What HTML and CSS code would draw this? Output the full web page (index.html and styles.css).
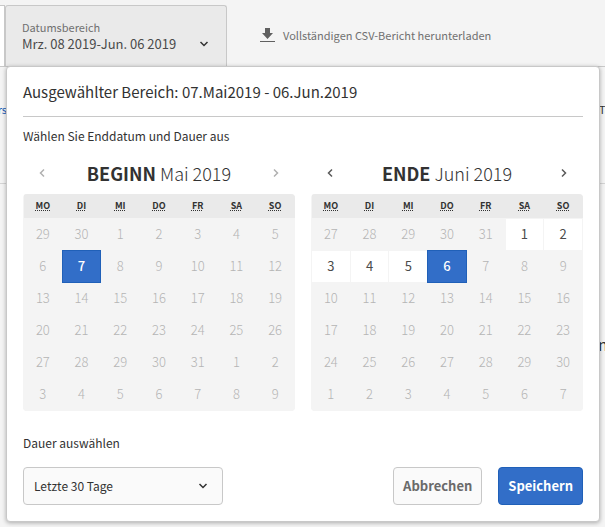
FILE: index.html
```html
<!DOCTYPE html>
<html lang="de">
<head>
<meta charset="utf-8">
<meta name="viewport" content="width=device-width, initial-scale=1">
<title>Datumsbereich</title>
<link rel="stylesheet" href="styles.css">
</head>
<body>
<header class="toolbar">
  <div class="filters">
    <div class="filter-stub"></div>
    <button class="range-button" type="button" aria-expanded="true">
      <span class="range-label">Datumsbereich</span>
      <span class="range-value">Mrz. 08 2019-Jun. 06 2019
        <svg class="chevron" viewBox="0 0 10 6" aria-hidden="true"><path d="M1.500 1 5 4.500 8.500 1"/></svg>
      </span>
    </button>
  </div>
  <a class="download" href="#">
    <svg class="download-icon" viewBox="0 0 15 14" aria-hidden="true"><path d="M5 0h5v5h3L7.500 11 2 5h3zM0 13h15v1H0z"/></svg>
    Vollständigen CSV-Bericht herunterladen
  </a>
</header>
<main class="report">
  <div class="report-head"><span class="cut-link">rs</span><span class="cut-heading">Ta</span></div>
  <div class="report-body"><span class="cut-text">n</span></div>

  <form class="popover" aria-label="Datumsbereich">
    <h2 class="title">Ausgewählter Bereich: 07.Mai2019 - 06.Jun.2019</h2>
    <p class="hint">Wählen Sie Enddatum und Dauer aus</p>
    <div class="calendars">
      <section class="calendar">
        <div class="month">
          <button class="nav" type="button" disabled aria-label="Zurück"><svg viewBox="0 0 6 10" aria-hidden="true"><path d="M5 1.500 1.500 5 5 8.500"/></svg></button>
          <h3 class="month-name"><b>BEGINN</b> Mai 2019</h3>
          <button class="nav" type="button" disabled aria-label="Weiter"><svg viewBox="0 0 6 10" aria-hidden="true"><path d="M1 1.500 4.500 5 1 8.500"/></svg></button>
        </div>
        <div class="grid-frame">
        <table class="days">
          <thead><tr><th><abbr>MO</abbr></th><th><abbr>DI</abbr></th><th><abbr>MI</abbr></th><th><abbr>DO</abbr></th><th><abbr>FR</abbr></th><th><abbr>SA</abbr></th><th><abbr>SO</abbr></th></tr></thead>
          <tbody>
            <tr><td>29</td><td>30</td><td>1</td><td>2</td><td>3</td><td>4</td><td>5</td></tr>
            <tr><td>6</td><td class="selected">7</td><td>8</td><td>9</td><td>10</td><td>11</td><td>12</td></tr>
            <tr><td>13</td><td>14</td><td>15</td><td>16</td><td>17</td><td>18</td><td>19</td></tr>
            <tr><td>20</td><td>21</td><td>22</td><td>23</td><td>24</td><td>25</td><td>26</td></tr>
            <tr><td>27</td><td>28</td><td>29</td><td>30</td><td>31</td><td>1</td><td>2</td></tr>
            <tr><td>3</td><td>4</td><td>5</td><td>6</td><td>7</td><td>8</td><td>9</td></tr>
          </tbody>
        </table>
        </div>
      </section>
      <section class="calendar">
        <div class="month">
          <button class="nav" type="button" aria-label="Zurück"><svg viewBox="0 0 6 10" aria-hidden="true"><path d="M5 1.500 1.500 5 5 8.500"/></svg></button>
          <h3 class="month-name"><b>ENDE</b> Juni 2019</h3>
          <button class="nav" type="button" aria-label="Weiter"><svg viewBox="0 0 6 10" aria-hidden="true"><path d="M1 1.500 4.500 5 1 8.500"/></svg></button>
        </div>
        <div class="grid-frame">
        <table class="days">
          <thead><tr><th><abbr>MO</abbr></th><th><abbr>DI</abbr></th><th><abbr>MI</abbr></th><th><abbr>DO</abbr></th><th><abbr>FR</abbr></th><th><abbr>SA</abbr></th><th><abbr>SO</abbr></th></tr></thead>
          <tbody>
            <tr><td>27</td><td>28</td><td>29</td><td>30</td><td>31</td><td class="open">1</td><td class="open">2</td></tr>
            <tr><td class="open">3</td><td class="open">4</td><td class="open">5</td><td class="selected">6</td><td>7</td><td>8</td><td>9</td></tr>
            <tr><td>10</td><td>11</td><td>12</td><td>13</td><td>14</td><td>15</td><td>16</td></tr>
            <tr><td>17</td><td>18</td><td>19</td><td>20</td><td>21</td><td>22</td><td>23</td></tr>
            <tr><td>24</td><td>25</td><td>26</td><td>27</td><td>28</td><td>29</td><td>30</td></tr>
            <tr><td>1</td><td>2</td><td>3</td><td>4</td><td>5</td><td>6</td><td>7</td></tr>
          </tbody>
        </table>
        </div>
      </section>
    </div>
    <label class="duration-label" for="duration">Dauer auswählen</label>
    <div class="actions">
      <div class="select-box">
        <select id="duration"><option>Letzte 30 Tage</option></select>
        <svg class="chevron" viewBox="0 0 10 6" aria-hidden="true"><path d="M1.500 1 5 4.500 8.500 1"/></svg>
      </div>
      <button class="button" type="button">Abbrechen</button>
      <button class="button primary" type="submit">Speichern</button>
    </div>
  </form>
</main>
</body>
</html>
```
FILE: styles.css
```css
* {
  box-sizing: border-box;
}

body {
  margin: 0;
  min-height: 100vh;
  overflow: hidden;
  background: #f4f4f4;
  color: #323232;
  font-family: "Noto Sans CJK SC", "Noto Sans", sans-serif;
  font-size: 12px;
  line-height: 16px;
}

button,
select {
  font: inherit;
  color: inherit;
  margin: 0;
}

h2,
h3,
p {
  margin: 0;
}

.toolbar {
  display: flex;
  align-items: center;
  padding-top: 5px;
  gap: 33px;
}

.filters {
  display: flex;
  width: 227px;
  height: 61px;
}

.filter-stub {
  width: 5px;
  background: #fff;
  border: solid #c8c8c8;
  border-width: 1px 1px 0 0;
}

.range-button {
  flex: 1;
  display: flex;
  flex-direction: column;
  justify-content: center;
  padding: 0 17px 0 16px;
  border: 1px solid #c8c8c8;
  border-bottom: 0;
  border-radius: 3px 3px 0 0;
  background: #eaeaea;
  text-align: left;
}

.range-label {
  color: #707070;
  font-size: 11px;
  line-height: 16px;
}

.range-value {
  display: flex;
  align-items: center;
  justify-content: space-between;
  width: 100%;
  font-size: 13px;
  line-height: 18px;
  color: #4b4b4b;
}

.chevron {
  width: 10px;
  height: 6px;
  fill: none;
  stroke: #323232;
  stroke-width: 1.5;
}

.download {
  display: flex;
  align-items: center;
  gap: 8px;
  padding-bottom: 2px;
  color: #707070;
  font-size: 11px;
  text-decoration: none;
}

.download-icon {
  width: 15px;
  height: 14px;
  fill: #606060;
}

.report {
  position: relative;
  border-top: 1px solid #c8c8c8;
}

.report-head {
  display: flex;
  justify-content: space-between;
  height: 117px;
  padding-top: 34px;
  border-bottom: 1px solid #d4d4d4;
  font-size: 11px;
}

.cut-link {
  display: flex;
  justify-content: flex-end;
  width: 7px;
  color: #2062b8;
}

.cut-heading {
  width: 6px;
}

.report-body {
  display: flex;
  justify-content: flex-end;
  height: 343px;
  padding-top: 150px;
}

.cut-text {
  width: 7px;
  font-size: 16px;
  line-height: 20px;
}

.popover {
  position: absolute;
  top: -1px;
  left: 6px;
  right: 5px;
  padding: 12px 16px 16px;
  border: 1px solid #c8c8c8;
  border-radius: 4px;
  background: #fff;
  box-shadow: 0 1px 4px rgba(0, 0, 0, 0.3);
}

.title {
  padding-bottom: 12px;
  border-bottom: 1px solid #c8c8c8;
  font-size: 15px;
  font-weight: 400;
  line-height: 25px;
}

.hint {
  padding: 11px 0 8px;
}

.calendars {
  display: grid;
  grid-template-columns: 1fr 1fr;
  gap: 16px;
}

.month {
  display: flex;
  align-items: center;
  justify-content: space-between;
  height: 42px;
  padding: 0 10px;
}

.month-name {
  font-size: 18px;
  font-weight: 300;
  line-height: 24px;
}

.month-name b {
  font-weight: 700;
}

.nav {
  display: grid;
  place-items: center;
  width: 18px;
  height: 24px;
  padding: 0;
  border: 0;
  background: none;
}

.nav svg {
  width: 6px;
  height: 10px;
  fill: none;
  stroke: #5a5a5a;
  stroke-width: 1.5;
}

.nav:disabled svg {
  stroke: #b0b0b0;
}

.grid-frame {
  overflow: hidden;
  border-radius: 4px;
}

.days {
  width: 100%;
  table-layout: fixed;
  border-collapse: collapse;
  background: #f4f4f4;
  text-align: center;
}

.days th {
  height: 24px;
  padding: 0;
  background: #eaeaea;
  font-size: 9px;
  line-height: 12px;
  font-weight: 700;
}

.days abbr {
  text-decoration: underline dotted;
}

.days td {
  height: 32px;
  padding: 0;
  border: 1px solid #f4f4f4;
  color: #b4b4b4;
  font-size: 13px;
  font-weight: 300;
}

.days .open {
  background: #fff;
  color: #4b4b4b;
  font-weight: 400;
}

.days .selected {
  border: 1px double #2060b8;
  background: #326ec8;
  color: #fff;
  font-weight: 500;
}

.duration-label {
  display: block;
  padding: 24px 0 16px;
}

.actions {
  display: flex;
  gap: 16px;
}

.select-box {
  display: grid;
  align-items: center;
  width: 200px;
  margin-right: auto;
}

.select-box > * {
  grid-area: 1 / 1;
}

.select-box select {
  appearance: none;
  width: 100%;
  height: 38px;
  padding: 0 32px 0 10px;
  border: 1px solid #c8c8c8;
  border-radius: 4px;
  background: #fafafa;
}

.select-box .chevron {
  justify-self: end;
  margin-right: 15px;
  pointer-events: none;
}

.button {
  height: 38px;
  padding: 0 9px;
  border: 1px solid #c8c8c8;
  border-radius: 4px;
  background: #fafafa;
  color: #6a6a6a;
  font-size: 13px;
  font-weight: 700;
}

.primary {
  border-color: #2060b8;
  background: #326ec8;
  color: #fff;
}
```
